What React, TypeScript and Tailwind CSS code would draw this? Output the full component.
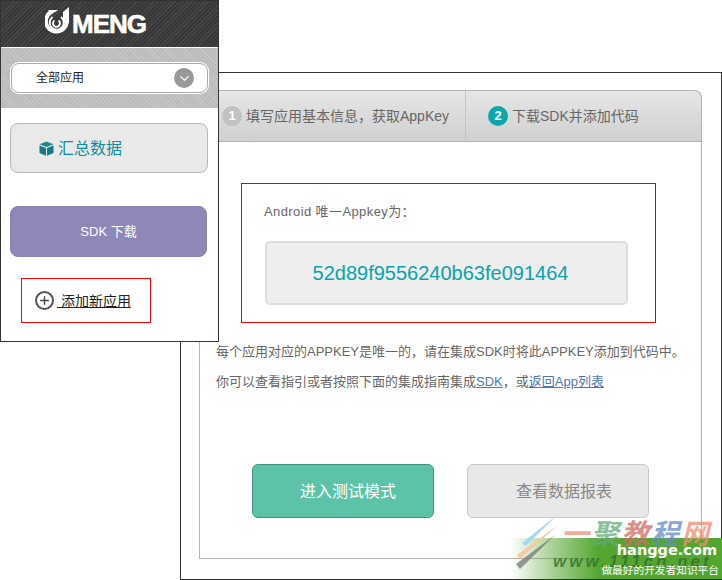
import { Plus, ChevronDown } from "lucide-react";

const font = "font-['Liberation_Sans','Noto_Sans_CJK_SC',sans-serif]";

function UmengLogo() {
  return (
    <div className="flex items-start h-[46px] pl-[44px] pt-[6px]">
      <svg width="25" height="28" viewBox="0 0 25 28" className="shrink-0">
        {/* outer ring, open at the top */}
        <path d="M3.500 5 H6 A10.500 10.500 0 1 0 20 8" fill="none" stroke="#fff" strokeWidth="4" />
        <path d="M7.500 10 A7 7 0 1 0 16 10" fill="none" stroke="#fff" strokeWidth="1.800" />
        <path d="M9.500 13.500 A3.500 3.500 0 1 0 13.500 13.500" fill="none" stroke="#fff" strokeWidth="2" />
        {/* stem */}
        <path d="M24 0 V16 H18 V5 Z" fill="#fff" />
      </svg>
      <span className="ml-[2px] mt-[5px] font-bold text-[26px] leading-[24px] tracking-[-1px] text-white [-webkit-text-stroke:0.6px_white]">
        MENG
      </span>
    </div>
  );
}

function CubeIcon() {
  return (
    <svg width="15" height="15" viewBox="0 0 15 15" className="shrink-0">
      <path d="M7.500 0.500 L14.500 3.200 L7.500 6 L0.500 3.200 Z" fill="#1c8a8c" />
      <path d="M0.500 4.500 L7 7 V14.800 L0.500 12 Z" fill="#157b80" />
      <path d="M14.500 4.500 L8 7 V14.800 L14.500 12 Z" fill="#157b80" />
    </svg>
  );
}

function Sidebar() {
  return (
    <aside className="absolute left-0 top-0 z-10 w-[219px] h-[342px] bg-white border border-[#333]">
      <div className="h-[46px] bg-[#3d3d3d] bg-[repeating-linear-gradient(135deg,#484848_0,#484848_1px,#383838_1px,#383838_3px)]">
        <UmengLogo />
      </div>
      <div className="h-[60px] mt-[1px] pt-[15px] px-[10px] bg-[#c2c2c2] bg-[repeating-linear-gradient(45deg,#c6c6c6_0,#c6c6c6_1px,#bcbcbc_1px,#bcbcbc_3px)]">
        <div className="h-[30px] flex items-center justify-between pl-[24px] pr-[13px] bg-white rounded-[8px] border border-[#aaa] shadow-[0_0_0_1px_#fff]">
          <span className="text-[12px] text-[#222]">全部应用</span>
          <span className="w-[20px] h-[20px] rounded-full bg-[#999] flex items-center justify-center">
            <ChevronDown size={15} color="#fff" strokeWidth={2} />
          </span>
        </div>
      </div>
      <div className="mx-[9px] mt-[15px] w-[198px] h-[50px] flex items-center gap-[4px] pl-[28px] bg-[#e9e9e9] border border-[#b8b8b8] rounded-[8px]">
        <CubeIcon />
        <span className="text-[16px] text-[#0b8f9d] mt-[2px]">汇总数据</span>
      </div>
      <div className="mx-[9px] mt-[33px] w-[197px] h-[51px] flex items-center justify-center bg-[#8e87b8] border border-[#8a84b2] rounded-[8px] text-[13px] text-white">
        SDK 下载
      </div>
      <div className="ml-[20px] mt-[21px] w-[130px] h-[45px] flex items-center pl-[13px] border border-[#f00]">
        <span className="w-[19px] h-[19px] shrink-0 rounded-full border-2 border-[#555] flex items-center justify-center">
          <Plus size={13} color="#444" strokeWidth={2.500} />
        </span>
        <a className="ml-[3px] text-[14px] leading-[19px] text-[#222] underline whitespace-pre mt-[1px]">{" 添加新应用"}</a>
      </div>
    </aside>
  );
}

function Watermark() {
  return (
    <div className="absolute right-0 bottom-0 z-20 w-[242px] h-[80px] overflow-hidden pointer-events-none">
      <div className="absolute left-[30px] right-0 top-[38px] bottom-[1px] bg-[linear-gradient(90deg,rgba(84,166,48,0)_0%,rgba(84,166,48,0.5)_20%,#54a630_42%,#54a630_100%)]" />
      <svg width="60" height="60" viewBox="0 0 60 60" className="absolute left-[30px] top-[12px]">
        <path d="M47 3 L16 34 L12 31 Z" fill="#a9d8ee" />
        <path d="M48 13 L10 47 L7 43 Z" fill="#f5c9a2" />
        <path d="M45 23 L10 57 L6 52 Z" fill="#777" opacity="0.75" />
      </svg>
      <div className="absolute left-[81px] top-[20px] flex gap-[2px] text-[28px] leading-[30px] font-bold italic whitespace-nowrap opacity-75">
        <span className="text-[#f08f80]">一</span>
        <span className="text-[#62aa78]">聚</span>
        <span className="text-[#cf6a66]">教</span>
        <span className="text-[#648cc8]">程</span>
        <span className="text-[#ef8c74]">网</span>
      </div>
      <div className="absolute left-[73px] top-[52px] text-[17px] leading-[20px] font-bold italic tracking-[3px] text-[#2f6b2a]/75 whitespace-nowrap">
        www.111cn.net
      </div>
      <div className="absolute right-[5px] top-[41px] font-['DejaVu_Sans',sans-serif] text-[14.500px] leading-[18px] font-bold text-white whitespace-nowrap">
        hangge.com
      </div>
      <div className="absolute right-[3px] top-[63px] text-[10.700px] leading-[15px] text-white whitespace-nowrap">
        做最好的开发者知识平台
      </div>
    </div>
  );
}

function Panel() {
  return (
    <main className="absolute left-[180px] top-[72px] w-[542px] h-[508px] bg-white border border-[#333] pl-[18px] pr-[19px] pt-[17px] pb-[20px] text-[#666]">
      <div className="h-full border border-t-0 border-[#b4b4b4] rounded-tr-[8px]">
        <div className="flex h-[52px] -mx-px border border-[#b4b4b4] rounded-tr-[8px] bg-[linear-gradient(#e6e6e6,#d0d0d0)]">
          <div className="w-[266px] shrink-0 flex items-center pl-[22px] gap-[4px] border-r border-[#c4c4c4]">
            <span className="w-[20px] h-[20px] rounded-full bg-[#c2c2c2] flex items-center justify-center text-[13px] font-bold text-white">1</span>
            <span className="text-[14px] whitespace-nowrap">填写应用基本信息，获取AppKey</span>
          </div>
          <div className="flex items-center pl-[22px] gap-[4px]">
            <span className="w-[20px] h-[20px] rounded-full bg-[#0aa8ad] flex items-center justify-center text-[13px] font-bold text-white">2</span>
            <span className="text-[14px] whitespace-nowrap">下载SDK并添加代码</span>
          </div>
        </div>

        <div className="ml-[41px] mt-[41px] w-[415px] h-[140px] border border-[#e60000] pt-[20px] pl-[22px]">
          <p className="text-[13px] leading-[16px] tracking-[0.4px]">Android 唯一Appkey为：</p>
          <div className="ml-px mt-[21px] w-[363px] h-[64px] flex items-center justify-center pr-[12px] bg-[#eee] border-2 border-[#ddd] rounded-[5px] text-[20px] text-[#0aa3ad]">
            52d89f9556240b63fe091464
          </div>
        </div>

        <p className="ml-[16px] mt-[20px] text-[13px] leading-[18px] whitespace-nowrap">每个应用对应的APPKEY是唯一的，请在集成SDK时将此APPKEY添加到代码中。</p>
        <p className="ml-[16px] mt-[12px] text-[13px] leading-[18px] whitespace-nowrap">
          你可以查看指引或者按照下面的集成指南集成<a className="text-[#4f74b8] underline">SDK</a>，或<a className="text-[#4f74b8] underline">返回App列表</a>
        </p>

        <div className="flex gap-[33px] ml-[52px] mt-[73px]">
          <button className="w-[182px] h-[54px] flex items-center justify-center pl-[10px] pt-[2px] rounded-[6px] bg-[#5cc3a8] border border-[#3d9580] text-[16px] text-white">进入测试模式</button>
          <button className="w-[182px] h-[54px] flex items-center justify-center pl-[12px] pt-[2px] rounded-[6px] bg-[#e8e8e8] border border-[#c8c8c8] text-[16px] text-[#888]">查看数据报表</button>
        </div>
      </div>
    </main>
  );
}

export default function App() {
  return (
    <div className={`relative w-[722px] h-[580px] overflow-hidden bg-white ${font}`}>
      <Panel />
      <Sidebar />
      <Watermark />
    </div>
  );
}
